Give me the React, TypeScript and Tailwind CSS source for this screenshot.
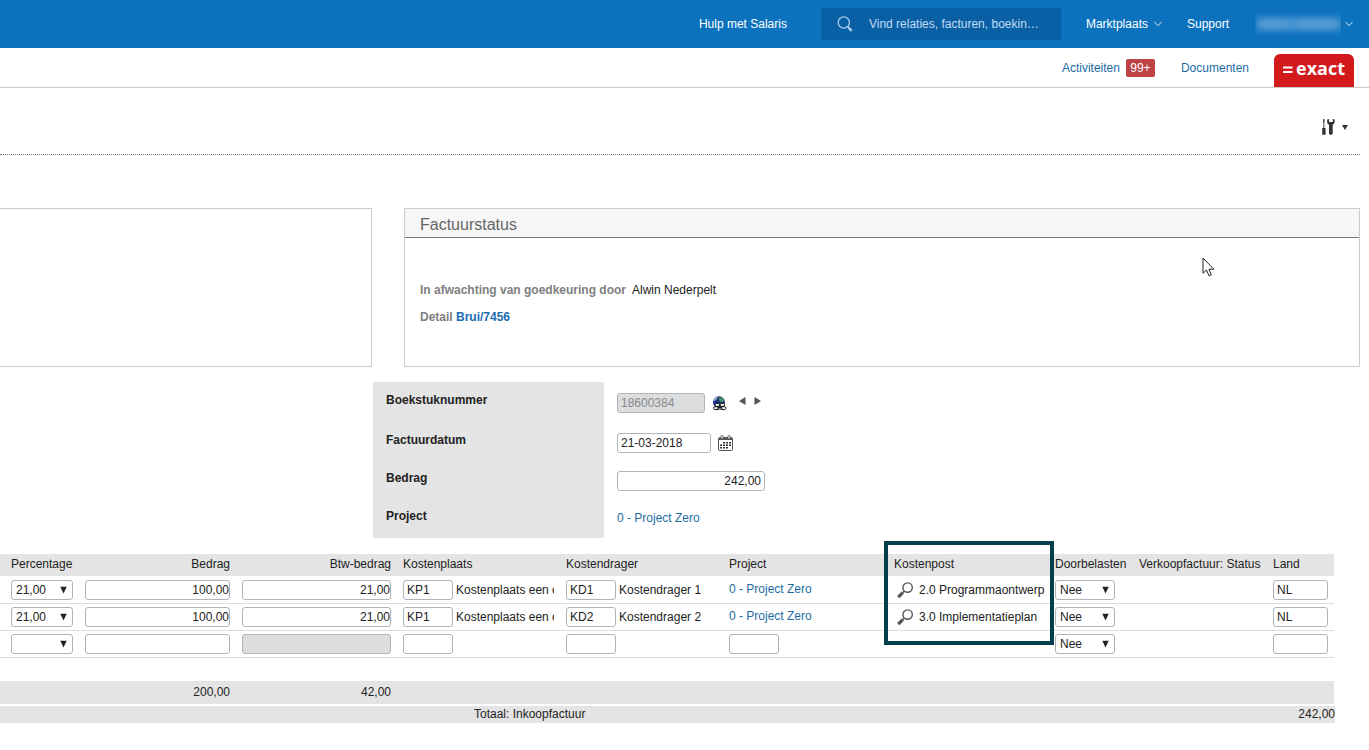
import React from 'react';

const inputBase = 'h-5 border border-[#b0b4b8] rounded-[3px] bg-white text-[#222] outline-none';

interface Line {
  percentage: string;
  bedrag: string;
  btw: string;
  plaats: string;
  plaatsNaam: string;
  drager: string;
  dragerNaam: string;
  project?: string;
  post?: string;
  land: string;
}

const lines: Line[] = [
  {
    percentage: '21,00',
    bedrag: '100,00',
    btw: '21,00',
    plaats: 'KP1',
    plaatsNaam: 'Kostenplaats een e',
    drager: 'KD1',
    dragerNaam: 'Kostendrager 1',
    project: '0 - Project Zero',
    post: '2.0 Programmaontwerp',
    land: 'NL',
  },
  {
    percentage: '21,00',
    bedrag: '100,00',
    btw: '21,00',
    plaats: 'KP1',
    plaatsNaam: 'Kostenplaats een e',
    drager: 'KD2',
    dragerNaam: 'Kostendrager 2',
    project: '0 - Project Zero',
    post: '3.0 Implementatieplan',
    land: 'NL',
  },
  { percentage: '', bedrag: '', btw: '', plaats: '', plaatsNaam: '', drager: '', dragerNaam: '', land: '' },
];

const Chevron = () => (
  <svg width="8" height="6" viewBox="0 0 8 6" fill="none" stroke="#d5e6f5" strokeWidth="1">
    <path d="M0.5 1L4 4.7L7.5 1" />
  </svg>
);

interface SelectProps {
  label: string;
  value: string;
  options: string[];
  className: string;
}

const Select: React.FC<SelectProps> = ({ label, value, options, className }) => (
  <div className={`relative ${className}`}>
    <select
      aria-label={label}
      defaultValue={value}
      className={`${inputBase} block w-full appearance-none pl-1 pr-4`}
    >
      {options.map((o) => (
        <option key={o} value={o}>{o}</option>
      ))}
    </select>
    <svg className="absolute right-1.5 top-1.5 pointer-events-none" width="7" height="8" viewBox="0 0 7 8">
      <path d="M0.3 0.8H6.7L3.5 7.5Z" fill="#222" />
    </svg>
  </div>
);

const TopBar = () => (
  <header className="h-12 bg-[#0c72be] flex items-center justify-end pr-4 text-white">
    <a href="#salaris" className="mr-[34px]">Hulp met Salaris</a>
    <div className="w-60 h-8 bg-[#0a60a5] flex items-center pl-4 mr-[25px]">
      <svg width="17" height="17" viewBox="0 0 17 17" fill="none" stroke="#a9cdee">
        <circle cx="6.8" cy="6.5" r="5.6" strokeWidth="1.3" />
        <path d="M10.8 10.6L12 11.9" strokeWidth="1.3" />
        <path d="M11.6 11.6L14.6 15" strokeWidth="2.4" />
      </svg>
      <input
        type="text"
        aria-label="Zoeken"
        placeholder="Vind relaties, facturen, boekin…"
        className="ml-[15px] w-44 bg-transparent outline-none placeholder:text-[#c3dcf3]"
      />
    </div>
    <button className="flex items-center gap-1.5 mr-[25px]">
      Marktplaats
      <Chevron />
    </button>
    <a href="#support" className="mr-[26px]">Support</a>
    <button aria-label="Account" className="flex items-center gap-1">
      <span className="w-[86px] h-6 flex items-center overflow-hidden">
        <span className="w-9 h-2.5 bg-[#6aa9dc] blur-[4px] ml-0.5" />
        <span className="w-12 h-2.5 bg-[#6aa9dc] blur-[4px]" />
      </span>
      <Chevron />
    </button>
  </header>
);

const SubBar = () => (
  <nav className="h-10 border-b border-[#cbcbcb] flex items-start justify-end pr-[15px] text-[#1b6ca3]">
    <a href="#activiteiten" className="flex items-center gap-1.5 mt-[11px] mr-[26px]">
      Activiteiten
      <span className="h-[18px] w-[29px] leading-[18px] text-center rounded-[2px] bg-[#bd4243] text-white">99+</span>
    </a>
    <a href="#documenten" className="mt-[11px] mr-[25px] leading-[18px]">Documenten</a>
    <a
      href="#home"
      className="w-20 h-[33px] mt-1.5 bg-[#d2191c] rounded-t-[6px] flex items-start justify-center text-white"
    >
      <svg className="mt-3 mr-[3px]" width="10" height="8" viewBox="0 0 10 8">
        <path d="M0 1.5H9.5M0 6H9.5" stroke="#fff" strokeWidth="2.2" />
      </svg>
      <span className="font-['Open_Sans',sans-serif] font-bold text-lg leading-7">exact</span>
    </a>
  </nav>
);

const Toolbar = () => (
  <div className="h-[67px] mr-[9px] border-b border-dotted border-[#777] flex justify-end items-start pt-[31px] pr-3">
    <button aria-label="Instellingen" className="flex items-center gap-[7px]">
      <svg width="13" height="16" viewBox="0 0 13 16" fill="#333">
        <path d="M1.2 0H2.4L2.6 2.6L2.3 3.4V9H3.6V15.8H0.2V9H1.4V3.4L1 2.6Z" />
        <path d="M5.2 0.4V3.7Q5.4 5.2 7 5.8V14.5Q7 15.8 8.9 15.8Q10.7 15.8 10.7 14.5V5.8Q12.4 5.2 12.6 3.6V0.4L10.8 0V3H7.1V0Z" />
      </svg>
      <svg width="6" height="5" viewBox="0 0 6 5">
        <path d="M0 0H6L3 5Z" fill="#333" />
      </svg>
    </button>
  </div>
);

const StatusPanels = () => (
  <div className="mt-[53px] mr-[9px] flex gap-8">
    <section className="w-[372px] h-[159px] border border-l-0 border-[#cbcbcb]" />
    <section className="relative flex-1 border border-[#cbcbcb]">
      <h2 className="h-[29px] leading-[31px] pl-[15px] bg-[#f6f6f6] border-b border-[#777] text-base text-[#666]">
        Factuurstatus
      </h2>
      <div className="pt-11 pl-[15px] leading-4 font-bold text-[#808080]">
        <p>
          In afwachting van goedkeuring door
          <span className="ml-1.5 font-normal text-[#222]">Alwin Nederpelt</span>
        </p>
        <p className="mt-[11px]">
          Detail <a href="#detail" className="text-[#1b6cb0]">Brui/7456</a>
        </p>
      </div>
      <svg className="absolute right-36 top-12" width="13" height="20" viewBox="0 0 13 20">
        <path
          d="M1 1V16.3L4.5 13L7 18.8L9.3 17.8L6.9 12.2H11.8Z"
          fill="#fff"
          stroke="#222"
          strokeWidth="1"
        />
      </svg>
    </section>
  </div>
);

const GlobeIcon = () => (
  <svg width="15" height="15" viewBox="0 0 15 15">
    <circle cx="7" cy="6.2" r="5.9" fill="#1b3470" />
    <path d="M1.5 4Q3 1 6 0.7L5 3L2.6 5.2Z" fill="#8fb3cf" />
    <path d="M7 1.5L10.5 1.8L12 4.4L10.3 6.6L8.2 5.8L6.8 3.6Z" fill="#4b8f6c" />
    <path d="M1.2 5.5L3.6 5.2L4.3 8L2 8.6Z" fill="#1c1cc0" />
    <g fill="#fff" stroke="#111" strokeWidth="1">
      <rect x="3" y="7.5" width="4.6" height="2.8" rx="1.3" />
      <rect x="8" y="7.5" width="4.6" height="2.8" rx="1.3" />
      <rect x="1.5" y="10.7" width="5.6" height="2.9" rx="1.4" />
      <rect x="8.3" y="10.7" width="5.6" height="2.9" rx="1.4" />
      <rect x="5.2" y="11.4" width="5" height="1.5" rx="0.7" />
    </g>
  </svg>
);

const CalendarIcon = () => (
  <svg width="15" height="16" viewBox="0 0 15 16">
    <rect x="0.5" y="2.5" width="14" height="13" rx="1.2" fill="#fff" stroke="#555" />
    <path d="M1 3H14V5H1Z" fill="#555" />
    <g fill="#fff" stroke="#555" strokeWidth="0.9">
      <rect x="2.9" y="0.5" width="2.2" height="3.6" rx="1" />
      <rect x="9.9" y="0.5" width="2.2" height="3.6" rx="1" />
    </g>
    <g fill="#333">
      <path d="M5 7h2v1.5H5zM8 7h2v1.5H8zM11 7h2v1.5h-2z" />
      <path d="M2 9.5h2V11H2zM5 9.5h2V11H5zM8 9.5h2V11H8zM11 9.5h2V11h-2z" />
      <path d="M2 12h2v1.5H2zM5 12h2v1.5H5zM8 12h2v1.5H8z" />
    </g>
  </svg>
);

interface FieldProps {
  label: string;
  htmlFor?: string;
  tall?: boolean;
  children: React.ReactNode;
}

const Field: React.FC<FieldProps> = ({ label, htmlFor, tall, children }) => (
  <div className={`flex ${tall ? 'h-10' : 'h-[38px]'}`}>
    <div className="w-[231px] bg-[#e4e4e4] pt-2.5 pl-[13px] leading-4 font-bold text-[#222]">
      {htmlFor ? <label htmlFor={htmlFor}>{label}</label> : label}
    </div>
    <div className="pt-[11px] pl-[13px] flex items-start">{children}</div>
  </div>
);

const InvoiceForm = () => (
  <div className="mt-[15px] ml-[373px]">
    <Field label="Boekstuknummer" htmlFor="boekstuk" tall>
      <input
        id="boekstuk"
        disabled
        defaultValue="18600384"
        className="h-5 w-[88px] px-[3px] border border-[#b0b4b8] rounded-[3px] bg-[#dcdddf] text-[#888]"
      />
      <button aria-label="Koppeling" className="ml-[7px] mt-[3px]">
        <GlobeIcon />
      </button>
      <button aria-label="Vorige" className="ml-3 mt-1">
        <svg width="7" height="8" viewBox="0 0 7 8"><path d="M6.5 0V8L0 4Z" fill="#555" /></svg>
      </button>
      <button aria-label="Volgende" className="ml-2 mt-1">
        <svg width="7" height="8" viewBox="0 0 7 8"><path d="M0.5 0V8L7 4Z" fill="#555" /></svg>
      </button>
    </Field>
    <Field label="Factuurdatum" htmlFor="datum">
      <input id="datum" defaultValue="21-03-2018" className={`${inputBase} w-[94px] px-[3px]`} />
      <button aria-label="Kalender" className="ml-[7px] mt-0.5">
        <CalendarIcon />
      </button>
    </Field>
    <Field label="Bedrag" htmlFor="bedrag">
      <input id="bedrag" defaultValue="242,00" className={`${inputBase} w-[148px] px-[3px] text-right`} />
    </Field>
    <Field label="Project" tall>
      <a href="#project" className="leading-[18px] text-[#1b6ca3]">0 - Project Zero</a>
    </Field>
  </div>
);

const th = 'h-[23px] px-1.5 pb-0.5 font-normal whitespace-nowrap bg-[#e4e4e4] border-b border-white';
const td = 'h-[27px] px-1.5 border-b border-[#dcdfe0]';
const tf = 'h-[23px] px-1.5 pb-0.5 bg-[#e4e4e4] text-right';

const LinesTable = () => (
  <div className="mt-4 mr-[35px]">
    <table className="w-full table-fixed border-separate border-spacing-0 text-left">
      <colgroup>
        <col className="w-[79px]" />
        <col className="w-[157px]" />
        <col className="w-[161px]" />
        <col className="w-[163px]" />
        <col className="w-[163px]" />
        <col className="w-[165px]" />
        <col className="w-[161px]" />
        <col className="w-[84px]" />
        <col />
        <col className="w-[67px]" />
      </colgroup>
      <thead>
        <tr>
          <th className={`${th} pl-[11px]`}>Percentage</th>
          <th className={`${th} text-right`}>Bedrag</th>
          <th className={`${th} text-right`}>Btw-bedrag</th>
          <th className={th}>Kostenplaats</th>
          <th className={th}>Kostendrager</th>
          <th className={th}>Project</th>
          <th className={`${th} relative`}>
            Kostenpost
            <div className="absolute -left-1 top-[-13px] w-[170px] h-[104px] border-4 border-[#023e4c] pointer-events-none" />
          </th>
          <th className={th}>Doorbelasten</th>
          <th className={th}>Verkoopfactuur: Status</th>
          <th className={th}>Land</th>
        </tr>
      </thead>
      <tbody>
        {lines.map((line, i) => (
          <tr key={i}>
            <td className={`${td} pl-[11px]`}>
              <Select label="Percentage" value={line.percentage} options={['', '21,00']} className="w-[62px]" />
            </td>
            <td className={td}>
              <input aria-label="Bedrag" defaultValue={line.bedrag} className={`${inputBase} block w-full text-right`} />
            </td>
            <td className={td}>
              {line.btw ? (
                <input aria-label="Btw-bedrag" defaultValue={line.btw} className={`${inputBase} block w-full text-right`} />
              ) : (
                <input
                  aria-label="Btw-bedrag"
                  disabled
                  className="block h-5 w-full border border-[#b0b4b8] rounded-[3px] bg-[#dcdddf]"
                />
              )}
            </td>
            <td className={td}>
              <div className="flex items-center gap-[3px]">
                <input aria-label="Kostenplaats" defaultValue={line.plaats} className={`${inputBase} w-[50px] shrink-0 px-[3px]`} />
                <span className="overflow-hidden whitespace-nowrap">{line.plaatsNaam}</span>
              </div>
            </td>
            <td className={td}>
              <div className="flex items-center gap-[3px]">
                <input aria-label="Kostendrager" defaultValue={line.drager} className={`${inputBase} w-[50px] shrink-0 px-[3px]`} />
                <span className="overflow-hidden whitespace-nowrap">{line.dragerNaam}</span>
              </div>
            </td>
            <td className={td}>
              {line.project ? (
                <a href="#project" className="block pb-0.5 text-[#1b6ca3]">{line.project}</a>
              ) : (
                <input aria-label="Project" className={`${inputBase} block w-[50px] px-[3px]`} />
              )}
            </td>
            <td className={td}>
              {line.post && (
                <div className="flex items-center gap-1.5 pl-[3px] whitespace-nowrap">
                  <button aria-label="Kostenpost zoeken">
                    <svg className="block" width="16" height="17" viewBox="0 0 16 17" fill="none" stroke="#555">
                      <circle cx="10.6" cy="5.6" r="4.7" strokeWidth="1.4" />
                      <path d="M7.2 9.2L5.6 10.8" strokeWidth="1.4" />
                      <path d="M5.8 10.6L1.2 15.2" strokeWidth="3.2" />
                    </svg>
                  </button>
                  {line.post}
                </div>
              )}
            </td>
            <td className={td}>
              <Select label="Doorbelasten" value="Nee" options={['Nee', 'Ja']} className="w-[60px]" />
            </td>
            <td className={td} />
            <td className={td}>
              <input aria-label="Land" defaultValue={line.land} className={`${inputBase} block w-full px-[3px]`} />
            </td>
          </tr>
        ))}
        <tr>
          <td colSpan={10} className="h-[23px]" />
        </tr>
      </tbody>
      <tfoot>
        <tr>
          <td className={tf} />
          <td className={tf}>200,00</td>
          <td className={tf}>42,00</td>
          <td colSpan={7} className={tf} />
        </tr>
      </tfoot>
    </table>
    <div className="mt-0.5 -mr-px h-[17px] leading-[17px] flex justify-between bg-[#e4e4e4]">
      <span className="pl-[474px]">Totaal: Inkoopfactuur</span>
      <span>242,00</span>
    </div>
  </div>
);

export default function App() {
  return (
    <div className="min-h-screen bg-white font-['Liberation_Sans',Arial,sans-serif] text-xs text-[#222]">
      <TopBar />
      <SubBar />
      <Toolbar />
      <main>
        <StatusPanels />
        <InvoiceForm />
        <LinesTable />
      </main>
    </div>
  );
}
